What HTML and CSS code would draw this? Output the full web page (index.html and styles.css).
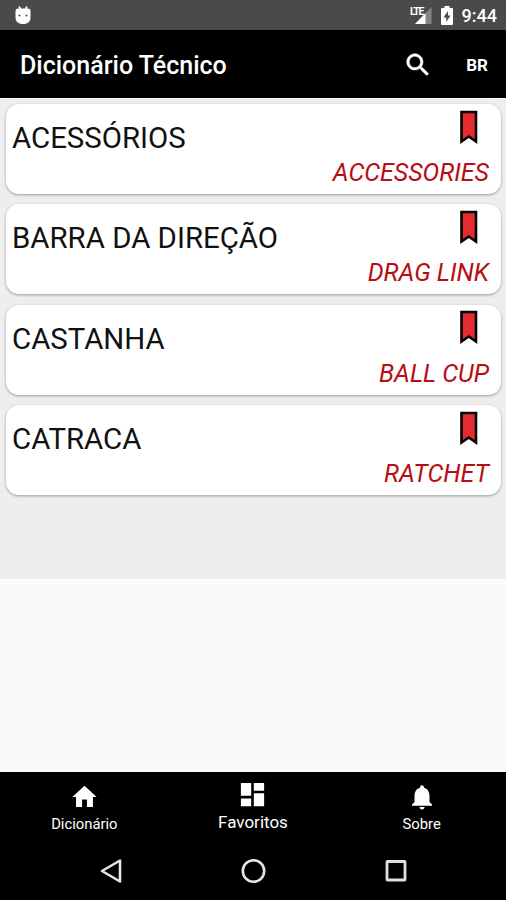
FILE: index.html
```html
<!DOCTYPE html>
<html lang="pt-BR">
<head>
  <meta charset="utf-8">
  <title>Dicionário Técnico</title>
  <link rel="stylesheet" href="styles.css">
</head>
<body>
  <div class="status-bar">
    <svg class="debug-icon" width="18" height="20" viewBox="0 0 18 20">
      <path d="M5 1.500L6.500 4M13 1.500L11.500 4" stroke="#fff" stroke-width="1.500"/>
      <path d="M4 3.500h10q2.500 0 2.500 3v6c0 4-2.500 6.500-7.500 6.500s-7.500-2.500-7.500-6.500v-6q0-3 2.500-3z" fill="#fff"/>
      <circle cx="5.500" cy="10.500" r="1" fill="#4a4a4a"/>
      <circle cx="12.500" cy="10.500" r="1" fill="#4a4a4a"/>
    </svg>
    <div class="status-right">
      <svg class="signal-icon" width="22" height="20" viewBox="0 0 22 20">
        <path d="M21.500 2v17H5z" fill="#858585"/>
        <path d="M15.500 8.200V19H5z" fill="#fff"/>
        <path d="M0 0h14v10H0z" fill="#4a4a4a"/>
        <text x="0" y="9.500" class="lte">LTE</text>
      </svg>
      <svg class="battery-icon" width="12" height="19" viewBox="0 0 12 19">
        <path d="M3.500 0h5v2H11q1 0 1 1v15q0 1-1 1H1q-1 0-1-1V3q0-1 1-1h2.500z" fill="#fff"/>
        <path d="M7 5L2.500 11.500h2.700V16L9.500 9.500H7z" fill="#4a4a4a"/>
      </svg>
      <span class="clock">9:44</span>
    </div>
  </div>

  <header class="toolbar">
    <h1>Dicionário Técnico</h1>
    <svg class="search-icon" width="30" height="30" viewBox="0 0 24 24">
      <path fill="#fff" stroke="#fff" stroke-width=".4" d="M15.500 14h-.79l-.28-.27C15.410 12.590 16 11.110 16 9.500 16 5.910 13.090 3 9.500 3S3 5.910 3 9.500 5.910 16 9.500 16c1.610 0 3.090-.59 4.230-1.570l.27.28v.79l5 4.990L20.490 19l-4.990-5zm-6 0C7.010 14 5 11.990 5 9.500S7.010 5 9.500 5 14 7.010 14 9.500 11.990 14 9.500 14z"/>
    </svg>
    <span class="lang">BR</span>
  </header>

  <main class="content">
    <div class="list">
      <div class="card">
        <div class="term">ACESSÓRIOS</div>
        <svg class="bookmark" width="18" height="35" viewBox="0 0 18 35">
          <path d="M1.500 2h14.500v29.500L8.750 26.500 1.500 31.500z" fill="#e32b31" stroke="#000" stroke-width="2.600"/>
        </svg>
        <div class="translation">ACCESSORIES</div>
      </div>
      <div class="card">
        <div class="term">BARRA DA DIREÇÃO</div>
        <svg class="bookmark" width="18" height="35" viewBox="0 0 18 35">
          <path d="M1.500 2h14.500v29.500L8.750 26.500 1.500 31.500z" fill="#e32b31" stroke="#000" stroke-width="2.600"/>
        </svg>
        <div class="translation">DRAG LINK</div>
      </div>
      <div class="card">
        <div class="term">CASTANHA</div>
        <svg class="bookmark" width="18" height="35" viewBox="0 0 18 35">
          <path d="M1.500 2h14.500v29.500L8.750 26.500 1.500 31.500z" fill="#e32b31" stroke="#000" stroke-width="2.600"/>
        </svg>
        <div class="translation">BALL CUP</div>
      </div>
      <div class="card">
        <div class="term">CATRACA</div>
        <svg class="bookmark" width="18" height="35" viewBox="0 0 18 35">
          <path d="M1.500 2h14.500v29.500L8.750 26.500 1.500 31.500z" fill="#e32b31" stroke="#000" stroke-width="2.600"/>
        </svg>
        <div class="translation">RATCHET</div>
      </div>
    </div>
  </main>

  <nav class="tabs">
    <div class="tab">
      <svg width="29" height="30" viewBox="0 0 24 24" preserveAspectRatio="none">
        <path fill="#fff" d="M10 20v-6h4v6h5v-8h3L12 3 2 12h3v8z"/>
      </svg>
      <span>Dicionário</span>
    </div>
    <div class="tab active">
      <svg width="31" height="31" viewBox="0 0 24 24">
        <path fill="#fff" d="M3 13h8V3H3v10zm0 8h8v-6H3v6zm10 0h8V11h-8v10zm0-18v6h8V3h-8z"/>
      </svg>
      <span>Favoritos</span>
    </div>
    <div class="tab">
      <svg width="30" height="30" viewBox="0 0 24 24">
        <path fill="#fff" d="M12 22c1.100 0 2-.9 2-2h-4c0 1.100.89 2 2 2zm6-6v-5c0-3.070-1.640-5.640-4.500-6.320V4c0-.83-.67-1.500-1.500-1.500s-1.500.67-1.500 1.500v.68C7.630 5.360 6 7.920 6 11v5l-2 2v1h16v-1l-2-2z"/>
      </svg>
      <span>Sobre</span>
    </div>
  </nav>

  <div class="system-nav">
    <svg width="24" height="26" viewBox="0 0 24 26">
      <path d="M21 2.500v21L3 13z" fill="none" stroke="#e6e6e6" stroke-width="2.600" stroke-linejoin="round"/>
    </svg>
    <svg width="26" height="26" viewBox="0 0 26 26">
      <circle cx="13.500" cy="13" r="10.700" fill="none" stroke="#e6e6e6" stroke-width="2.600"/>
    </svg>
    <svg width="24" height="26" viewBox="0 0 24 26">
      <rect x="4" y="3.500" width="18" height="18.500" rx=".5" fill="none" stroke="#e0e0e0" stroke-width="2.800"/>
    </svg>
  </div>
</body>
</html>
```

FILE: styles.css
```css
* {
  box-sizing: border-box;
}

body {
  margin: 0;
  height: 900px;
  display: flex;
  flex-direction: column;
  overflow: hidden;
  background-color: #fafafa;
  font-family: Roboto, sans-serif;
}

.status-bar {
  height: 30px;
  display: flex;
  align-items: center;
  justify-content: space-between;
  padding: 0 9px 0 14px;
  background-color: #4a4a4a;
}

.debug-icon {
  margin-bottom: 1px;
}

.status-right {
  display: flex;
  align-items: center;
}

.signal-icon {
  margin-right: 9px;
}

.lte {
  font-size: 10.5px;
  font-weight: 700;
  letter-spacing: -1.3px;
  fill: #fff;
}

.battery-icon {
  margin-right: 9px;
}

.clock {
  color: #fff;
  font-size: 18px;
  font-weight: 500;
}

.toolbar {
  height: 68px;
  display: flex;
  align-items: center;
  padding: 2px 18px 0 20px;
  background-color: #000;
  color: #fff;
}

.toolbar h1 {
  flex: 1;
  margin: 0;
  padding-top: 1px;
  font-size: 25px;
  font-weight: 500;
}

.search-icon {
  margin-right: 33px;
}

.lang {
  font-size: 17px;
  font-weight: 700;
}

.content {
  flex: 1;
}

.list {
  height: 481px;
  display: flex;
  flex-direction: column;
  gap: 10.4px;
  padding: 5px 5px 0 6px;
  border-top: 1px solid #fafafa;
  background-color: #eee;
}

.card {
  height: 90px;
  display: grid;
  grid-template-columns: 1fr auto;
  grid-template-rows: 52px 38px;
  padding: 0 12px 0 6px;
  border-radius: 13px;
  background-color: #fff;
  box-shadow: 0 1px 3px rgba(0, 0, 0, 0.35);
}

.term {
  padding-top: 16px;
  color: #111;
  font-size: 29.4px;
  line-height: 36px;
  white-space: nowrap;
}

.bookmark {
  margin: 5.5px 11px 0 0;
}

.translation {
  grid-column: 1 / 3;
  padding-top: 1px;
  color: #b80d12;
  font-size: 25px;
  font-style: italic;
  line-height: 32px;
  text-align: right;
}

.tabs {
  height: 71px;
  display: grid;
  grid-template-columns: repeat(3, 1fr);
  background-color: #000;
  color: #fff;
}

.tab {
  display: flex;
  flex-direction: column;
  align-items: center;
  padding-top: 10px;
  font-size: 14.8px;
  line-height: 25px;
}

.tab.active {
  padding-top: 7px;
  font-size: 17px;
}

.system-nav {
  height: 57px;
  display: flex;
  align-items: center;
  justify-content: center;
  gap: 117px;
  padding-bottom: 2px;
  background-color: #000;
}
```
